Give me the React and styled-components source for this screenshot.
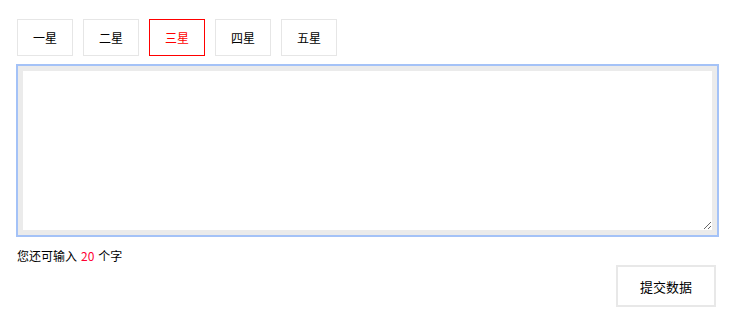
import React, { useState } from "react";
import styled, { createGlobalStyle } from "styled-components";

const Global = createGlobalStyle`
  html, body { margin: 0; padding: 0; background: #fff; }
  body { font-family: "Noto Sans CJK SC", "Noto Sans", sans-serif; color: #000; }
`;

const Page = styled.div`
  padding: 19px 15px 0 17px;
  display: flex;
  flex-direction: column;
`;

const StarRow = styled.div`
  display: flex;
  gap: 10px;
  margin-bottom: 10px;
`;

const StarButton = styled.button`
  width: 56px;
  height: 37px;
  box-sizing: border-box;
  background: #fff;
  border: 1px solid ${(p) => (p.$active ? "#ff0000" : "#e6e6e6")};
  color: ${(p) => (p.$active ? "#ff0000" : "#000")};
  font-family: inherit;
  font-size: 12px;
  padding: 0;
  cursor: pointer;
`;

const TextArea = styled.textarea`
  box-sizing: border-box;
  width: 699px;
  height: 169px;
  margin-left: 1px;
  border: 5px solid #ebebeb;
  box-shadow: 0 0 0 2px #a4c2f7;
  outline: none;
  resize: vertical;
  font-family: inherit;
  font-size: 12px;
`;

const Counter = styled.div`
  font-size: 12px;
  line-height: 16px;
  margin-top: 13px;
  color: #000;
`;

const Num = styled.span`
  color: #ff0033;
  margin: 0 4px;
`;

const Footer = styled.div`
  display: flex;
  justify-content: flex-end;
  margin-top: 1px;
`;

const Submit = styled.button`
  width: 100px;
  height: 42px;
  box-sizing: border-box;
  background: #fff;
  border: 2px solid #e8e8e8;
  font-family: inherit;
  font-size: 13px;
  color: #000;
  cursor: pointer;
`;

const stars = ["一星", "二星", "三星", "四星", "五星"];

export default function App() {
  const [active] = useState(2);
  return (
    <>
      <Global />
      <Page>
        <StarRow>
          {stars.map((s, i) => (
            <StarButton key={s} $active={i === active}>{s}</StarButton>
          ))}
        </StarRow>
        <TextArea />
        <Counter>
          您还可输入<Num>20</Num>个字
        </Counter>
        <Footer>
          <Submit>提交数据</Submit>
        </Footer>
      </Page>
    </>
  );
}
